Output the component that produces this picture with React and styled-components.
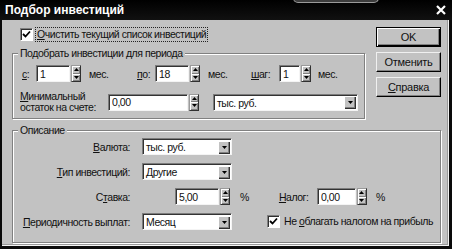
import React from 'react';
import styled, { createGlobalStyle } from 'styled-components';

const FACE = '#c2c2c2';

const Global = createGlobalStyle`
  html, body { margin: 0; padding: 0; background: #000; }
  body { font-family: "Liberation Sans", Arial, sans-serif; }
  * { box-sizing: border-box; }
`;

const Window = styled.div`
  position: relative;
  width: 452px;
  height: 249px;
  background: #0a0a0a;
  display: flex;
  flex-direction: column;
  overflow: hidden;
  font: 10.5px "Liberation Sans", Arial, sans-serif;
  letter-spacing: -0.45px;
  color: #111;
`;

const TitleBar = styled.div`
  height: 20px;
  flex: none;
  display: flex;
  align-items: center;
  justify-content: space-between;
  padding: 0 6px 0 5px;
  color: #fff;
  font: bold 12px "Liberation Sans", Arial, sans-serif;
  letter-spacing: 0;
  background: linear-gradient(#000, #111);
`;

const Notch = styled.div`
  position: absolute;
  left: 293px;
  top: -2px;
  width: 86px;
  height: 5px;
  border: 1px solid #9a9a9a;
  border-radius: 0 0 5px 5px;
  background: #3c3c3c;
`;

const Body = styled.div`
  flex: 1;
  margin: 0 3px 3px 2px;
  background: ${FACE};
  box-shadow: inset -1px -1px 0 #f2f2f2, inset -2px -2px 0 #9a9a9a;
  padding: 7px 0 0 10px;
  display: flex;
  flex-direction: column;
`;

const TopRow = styled.div`
  display: flex;
  align-items: flex-start;
`;

const LeftCol = styled.div`
  width: 353px;
  display: flex;
  flex-direction: column;
`;

const ButtonCol = styled.div`
  width: 65px;
  margin-left: 11px;
  display: flex;
  flex-direction: column;
  gap: 5px;
`;

const Button = styled.div`
  height: 20px;
  display: flex;
  align-items: center;
  justify-content: center;
  background: ${FACE};
  border: 1px solid;
  border-color: ${p => (p.$default ? '#000' : '#f0f0f0 #000 #000 #f0f0f0')};
  box-shadow: ${p =>
    p.$default
      ? 'inset 1px 1px 0 #fff, inset -1px -1px 0 #000, inset -2px -2px 0 #808080'
      : 'inset -1px -1px 0 #808080'};
  color: #111;
  font-size: 11px;
  letter-spacing: -0.3px;
`;

const CheckRow = styled.div`
  display: flex;
  align-items: center;
  height: 15px;
  margin-left: ${p => p.$indent || 0}px;
`;

const CheckBox = styled.div`
  width: 13px;
  height: 13px;
  flex: none;
  background: #fff;
  border: 1px solid;
  border-color: #808080 #fff #fff #808080;
  box-shadow: inset 1px 1px 0 #303030;
  display: flex;
  align-items: center;
  justify-content: center;
`;

const CheckLabel = styled.span`
  margin-left: 2px;
  padding: 0 1px;
  line-height: 13px;
  border: 1px dotted ${p => (p.$focus ? '#222' : 'transparent')};
  white-space: nowrap;
`;

const Group = styled.div`
  position: relative;
  width: ${p => p.$w}px;
  height: ${p => p.$h}px;
  margin-top: 11px;
  border: 1px solid #808080;
  box-shadow: inset 1px 1px 0 #fff, 1px 1px 0 #fff;
  padding: ${p => p.$pad};
  display: flex;
  flex-direction: column;
`;

const Legend = styled.span`
  position: absolute;
  top: -7px;
  left: 5px;
  padding: 0 2px;
  line-height: 13px;
  background: ${FACE};
  white-space: nowrap;
`;

const Row = styled.div`
  display: flex;
  align-items: center;
  height: ${p => p.$h || 17}px;
  margin-top: ${p => p.$mt || 0}px;
  margin-left: ${p => p.$ml || 0}px;
`;

const Cell = styled.div`
  display: flex;
  align-items: center;
  width: ${p => (p.$w ? `${p.$w}px` : 'auto')};
  flex: none;
`;

const Label = styled.span`
  width: ${p => (p.$w ? `${p.$w}px` : 'auto')};
  margin-left: ${p => p.$ml || 0}px;
  text-align: ${p => p.$align || 'left'};
  line-height: 12px;
  white-space: nowrap;
  flex: none;
`;

const Unit = styled.span`
  margin-left: ${p => p.$ml || 8}px;
  white-space: nowrap;
`;

const Input = styled.input`
  width: ${p => p.$w}px;
  height: 17px;
  margin: 0 0 0 ${p => p.$ml || 0}px;
  padding: 0 3px;
  font: inherit;
  letter-spacing: inherit;
  color: #111;
  background: #fff;
  border: 1px solid;
  border-color: #7c7c7c #f4f4f4 #f4f4f4 #7c7c7c;
  box-shadow: inset 1px 1px 0 #333;
  outline: none;
  flex: none;
`;

const Spin = styled.div`
  width: 10px;
  height: 17px;
  margin-left: ${p => p.$gap ?? 1}px;
  display: flex;
  flex-direction: column;
  border: 1px solid #303030;
  border-top-color: #9a9a9a;
  border-left-color: #9a9a9a;
  flex: none;
`;

const SpinHalf = styled.div`
  flex: 1;
  background: ${FACE};
  box-shadow: inset 1px 1px 0 #fff, inset -1px -1px 0 #808080;
  display: flex;
  align-items: center;
  justify-content: center;
`;

const Select = styled.div`
  width: ${p => p.$w}px;
  height: 17px;
  margin-left: ${p => p.$ml || 0}px;
  display: flex;
  align-items: center;
  background: #fff;
  border: 1px solid;
  border-color: #7c7c7c #f4f4f4 #f4f4f4 #7c7c7c;
  box-shadow: inset 1px 1px 0 #333;
  padding: 1px 1px 0 3px;
  flex: none;
`;

const SelectText = styled.span`
  flex: 1;
  white-space: nowrap;
`;

const SelectBtn = styled.div`
  width: 12px;
  height: 13px;
  background: ${FACE};
  box-shadow: inset 1px 1px 0 #fff, inset -1px -1px 0 #303030, inset -2px -2px 0 #808080;
  display: flex;
  align-items: center;
  justify-content: center;
  flex: none;
`;

const LabelBlock = styled.div`
  width: ${p => p.$w}px;
  line-height: 11px;
  flex: none;
`;

const Arrow = ({ up }) => (
  <svg width="5" height="3" viewBox="0 0 5 3">
    <polygon points={up ? '2.5,0 5,3 0,3' : '0,0 5,0 2.5,3'} fill="#000" />
  </svg>
);

const Check = () => (
  <svg width="9" height="9" viewBox="0 0 9 9">
    <polyline points="1,4 3.5,6.5 8,1.5" fill="none" stroke="#000" strokeWidth="1.8" />
  </svg>
);

const Close = () => (
  <svg width="10" height="10" viewBox="0 0 10 10">
    <path d="M1 1 L9 9 M9 1 L1 9" stroke="#fff" strokeWidth="2.2" />
  </svg>
);

const SpinBox = ({ gap }) => (
  <Spin $gap={gap}>
    <SpinHalf><Arrow up /></SpinHalf>
    <SpinHalf><Arrow /></SpinHalf>
  </Spin>
);

const Combo = ({ w, ml, children }) => (
  <Select $w={w} $ml={ml}>
    <SelectText>{children}</SelectText>
    <SelectBtn><Arrow /></SelectBtn>
  </Select>
);

export default function App() {
  return (
    <>
      <Global />
      <Window>
        <Notch />
        <TitleBar>
          <span>Подбор инвестиций</span>
          <Close />
        </TitleBar>
        <Body>
          <TopRow>
            <LeftCol>
              <CheckRow $indent={8}>
                <CheckBox><Check /></CheckBox>
                <CheckLabel $focus><u>О</u>чистить текущий список инвестиций</CheckLabel>
              </CheckRow>
              <Group $w={353} $h={66} $pad="11px 0 0 7px">
                <Legend>Подобрать инвестиции для периода</Legend>
                <Row $ml={2}>
                  <Cell $w={115}>
                    <Label $w={14}><u>с</u>:</Label>
                    <Input $w={34} readOnly value="1" />
                    <SpinBox />
                    <Unit $ml={8}>мес.</Unit>
                  </Cell>
                  <Cell $w={114}>
                    <Label $w={18}><u>п</u>о:</Label>
                    <Input $w={34} readOnly value="18" />
                    <SpinBox />
                    <Unit $ml={8}>мес.</Unit>
                  </Cell>
                  <Cell>
                    <Label $w={28}><u>ш</u>аг:</Label>
                    <Input $w={21} readOnly value="1" />
                    <SpinBox gap={1} />
                    <Unit $ml={7}>мес.</Unit>
                  </Cell>
                </Row>
                <Row $mt={11} $h={18}>
                  <LabelBlock $w={88}>
                    <u>М</u>инимальный<br />остаток на счете:
                  </LabelBlock>
                  <Input $w={80} readOnly value="0,00" />
                  <SpinBox gap={1} />
                  <Combo w={145} ml={14}>тыс. руб.</Combo>
                </Row>
              </Group>
            </LeftCol>
            <ButtonCol>
              <Button $default>OK</Button>
              <Button>Отменить</Button>
              <Button><span><u>С</u>правка</span></Button>
            </ButtonCol>
          </TopRow>
          <Group $w={429} $h={113} $pad="7px 0 0 7px">
            <Legend>Описание</Legend>
            <Row>
              <Label $w={110} $align="right"><u>В</u>алюта:</Label>
              <Combo w={90} ml={12}>тыс. руб.</Combo>
            </Row>
            <Row $mt={8}>
              <Label $w={110} $align="right"><u>Т</u>ип инвестиций:</Label>
              <Combo w={90} ml={12}>Другие</Combo>
            </Row>
            <Row $mt={8}>
              <Label $w={110} $align="right">С<u>т</u>авка:</Label>
              <Input $w={44} $ml={45} readOnly value="5,00" />
              <SpinBox />
              <Unit $ml={10}>%</Unit>
              <Label $ml={30} $w={38}><u>Н</u>алог:</Label>
              <Input $w={39} readOnly value="0,00" />
              <SpinBox />
              <Unit $ml={9}>%</Unit>
            </Row>
            <Row $mt={8}>
              <Label $w={110} $align="right"><u>П</u>ериодичность выплат:</Label>
              <Combo w={90} ml={12}>Месяц</Combo>
              <CheckRow $indent={35}>
                <CheckBox><Check /></CheckBox>
                <CheckLabel>Не <u>о</u>благать налогом на прибыль</CheckLabel>
              </CheckRow>
            </Row>
          </Group>
        </Body>
      </Window>
    </>
  );
}
